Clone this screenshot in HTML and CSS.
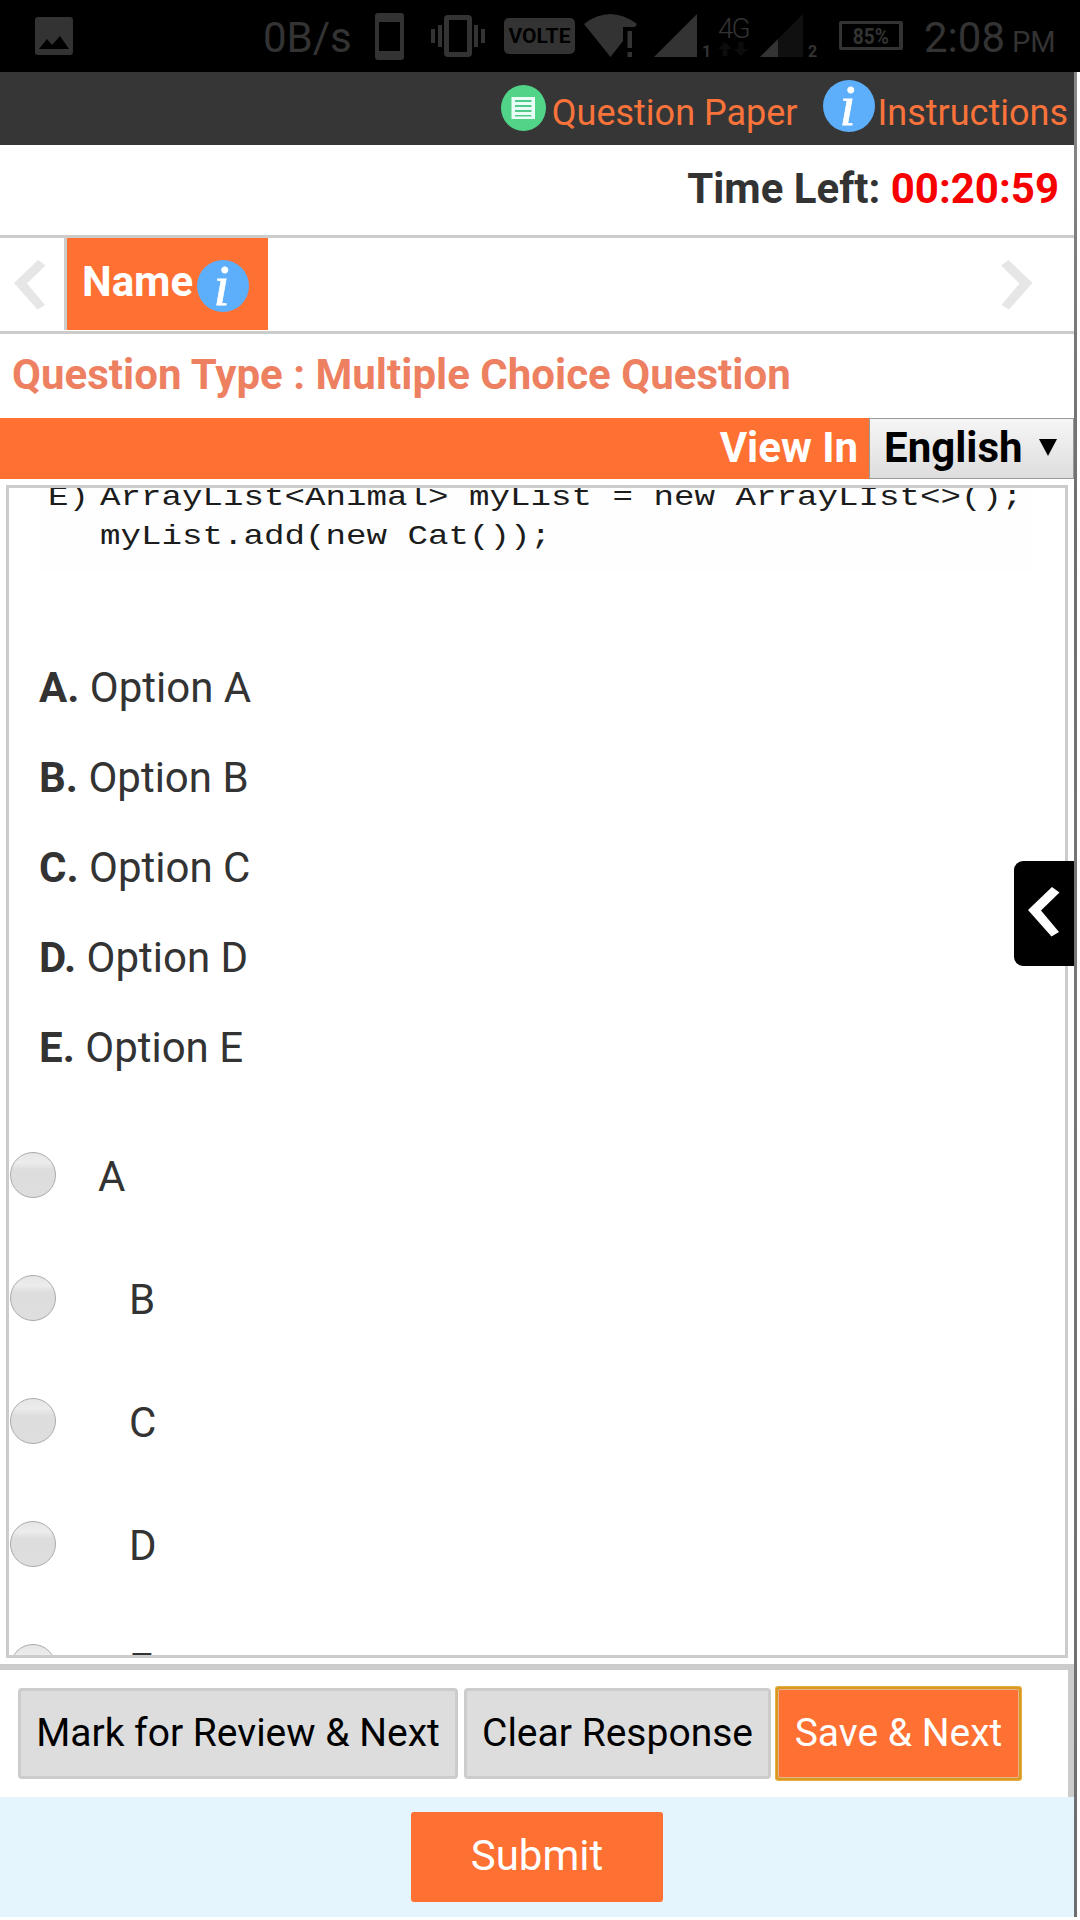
FILE: index.html
```html
<!DOCTYPE html>
<html lang="en">
<head>
<meta charset="utf-8">
<title>Online Exam</title>
<link rel="stylesheet" href="styles.css">
</head>
<body>
<div class="status">
  <svg class="st-picture" width="38" height="38" viewBox="0 0 38 38"><path fill-rule="evenodd" d="M3 0h32q3 0 3 3v32q0 3-3 3H3q-3 0-3-3V3q0-3 3-3zM4 32h30L25 19l-8 9-5-6z"/></svg>
  <span class="st-speed">0B/s</span>
  <svg class="st-phone" width="29" height="47" viewBox="0 0 29 47"><path fill-rule="evenodd" d="M3 0h23q3 0 3 3v41q0 3-3 3H3q-3 0-3-3V3q0-3 3-3zM4 9v29h21V9z"/></svg>
  <svg class="st-vibrate" width="54" height="42" viewBox="0 0 54 42"><path fill-rule="evenodd" d="M17 0h20q4 0 4 4v34q0 4-4 4H17q-4 0-4-4V4q0-4 4-4zM18 5v32h18V5z"/><path d="M0 14h4v14H0zM7 10h4v22H7zM43 10h4v22h-4zM50 14h4v14h-4z"/></svg>
  <span class="st-volte">VOLTE</span>
  <svg class="st-wifi" width="53" height="43" viewBox="0 0 53 43"><path d="M0 10Q26-10 53 10l-2 3H39v14L26.500 43z"/><path d="M43.500 17h4.500v17h-4.500zM43.500 38h4.500v5h-4.500z"/></svg>
  <svg class="st-signal" width="43" height="43" viewBox="0 0 43 43"><path d="M0 43 43 0v43z"/></svg>
  <span class="st-sim sim-one">1</span>
  <span class="st-net"><span>4G</span><svg width="30" height="14" viewBox="0 0 30 14"><path d="M7 0l7 7h-4.500v7h-5V7H0zM20.500 0h5v7H30l-7 7-7-7h4.500z"/></svg></span>
  <svg class="st-signal weak" width="43" height="43" viewBox="0 0 43 43"><path class="dim" d="M0 43 43 0v43z"/><path d="M0 43 18 25v18z"/></svg>
  <span class="st-sim sim-two">2</span>
  <span class="st-battery"><span>85%</span></span>
  <span class="st-time">2:08</span>
  <span class="st-pm">PM</span>
</div>

<div class="app">
  <main class="main">
    <header class="top">
      <svg class="paper-icon" width="45" height="46" viewBox="0 0 45 46"><ellipse cx="22.500" cy="23" rx="22.500" ry="23" fill="#51d488"/><path fill="#e9fdf6" d="M10.500 12h23.500v22H10.500z"/><path fill="#51c98a" d="M14 15h16.500v2H14zM14 20h16.500v2H14zM14 25h16.500v2H14zM14 30h16.500v1.500H14z"/></svg>
      <a class="link paper">Question Paper</a>
      <svg class="info-icon" width="52" height="52" viewBox="0 0 52 52"><circle cx="26" cy="26" r="26"/><text x="24.500" y="44.500">i</text></svg>
      <a class="link">Instructions</a>
    </header>
    <div class="timer">Time Left:&nbsp;<span class="clock">00:20:59</span></div>
    <nav class="tabs">
      <svg class="chev" width="32" height="50" viewBox="0 0 32 50"><path d="M0 23 24 0l7.500 5.500L13 23.500 31 45l-7.500 4.500z"/></svg>
      <div class="tab"><span>Name</span><svg class="info-icon" width="52" height="52" viewBox="0 0 52 52"><circle cx="26" cy="26" r="26"/><text x="24.500" y="44.500">i</text></svg></div>
      <svg class="chev next" width="32" height="50" viewBox="0 0 32 50"><path d="M31.500 23 7.500 0 0 5.500 18.500 23.500 .5 45 8 49.500z"/></svg>
    </nav>
    <h1 class="qtype">Question Type : Multiple Choice Question</h1>
    <div class="viewin">
      <span class="view-label">View In</span>
      <div class="lang"><span>English</span><svg width="18" height="17" viewBox="0 0 18 17"><path d="M0 0h18L9 17z"/></svg></div>
    </div>
    <section class="question">
      <div class="code">
        <pre>E)</pre>
        <pre>ArrayList&lt;Animal&gt; myList = new ArrayLIst&lt;&gt;();
myList.add(new Cat());</pre>
      </div>
      <ul class="options">
        <li><b>A.</b> Option A</li>
        <li><b>B.</b> Option B</li>
        <li><b>C.</b> Option C</li>
        <li><b>D.</b> Option D</li>
        <li><b>E.</b> Option E</li>
      </ul>
      <div class="answers">
        <label class="answer first"><i class="radio"></i><span>A</span></label>
        <label class="answer"><i class="radio"></i><span>B</span></label>
        <label class="answer"><i class="radio"></i><span>C</span></label>
        <label class="answer"><i class="radio"></i><span>D</span></label>
        <label class="answer"><i class="radio"></i><span>E</span></label>
      </div>
    </section>
    <div class="actions">
      <button class="btn mark">Mark for Review &amp; Next</button>
      <button class="btn clear">Clear Response</button>
      <button class="btn save">Save &amp; Next</button>
    </div>
    <footer class="bottom"><button class="submit">Submit</button></footer>
    <div class="drawer"><svg width="32" height="50" viewBox="0 0 32 50"><path d="M0 23 24 0l7.500 5.500L13 23.500 31 45l-7.500 4.500z"/></svg></div>
  </main>
  <div class="edge"></div>
</div>
</body>
</html>
```
FILE: styles.css
```css
* { box-sizing: border-box; }
body { margin: 0; width: 1080px; height: 1920px; overflow: hidden; background: #fff; color: #333; font: 42px Roboto, sans-serif; }
svg { display: block; flex: none; }
button { font-family: inherit; padding: 0; }

.status { display: flex; height: 72px; background: #000; color: #333; white-space: nowrap; line-height: 76px; }
.status > * { flex: none; }
.status svg { fill: #333; }
.st-picture { margin: 17px 0 0 35px; }
.st-speed { width: 89px; margin-left: 190px; }
.st-phone { margin: 13px 0 0 23px; }
.st-vibrate { margin: 15px 0 0 27px; }
.st-volte { width: 71px; height: 36px; margin: 18px 0 0 19px; background: #333; color: #000; border-radius: 5px; font-size: 21px; font-weight: 700; line-height: 36px; text-align: center; }
.st-wifi { margin: 14px 0 0 9px; }
.st-signal { margin: 14px 0 0 17px; }
.st-signal.weak { margin-left: 12px; }
.status .dim { fill: #101010; }
.st-sim { width: 9px; margin-left: 5px; padding-top: 42px; font-size: 16px; font-weight: 700; line-height: 19px; }
.st-net { width: 30px; margin-left: 7px; padding-top: 14px; font-size: 28px; font-weight: 300; line-height: 30px; letter-spacing: -2px; }
.st-net span { display: block; height: 28px; }
.status .st-net svg { fill: #0c0c0c; }
.st-battery { width: 64px; height: 29px; margin: 21px 0 0 22px; border: 3px solid #333; border-right-width: 4px; border-radius: 2px; font-size: 22px; font-weight: 700; line-height: 25px; text-align: center; }
.st-battery span { display: inline-block; margin: 0 -4px; transform: scaleX(.87); }
.st-time { width: 81px; margin-left: 21px; }
.st-pm { margin-left: 7px; padding-top: 4px; font-size: 29px; }

.app { display: flex; width: 1077px; height: 1845px; }
.main { position: relative; display: flex; flex-direction: column; width: 1074px; }
.main > * { flex: none; }
.edge { width: 3px; background: linear-gradient(#888, #6e6e6e 25%, #777 50%, #6e6e6e); }

.top { display: flex; align-items: flex-start; justify-content: flex-end; height: 73px; padding-right: 6px; background: #363636; }
.link { color: #f9733a; font-size: 36px; line-height: 83px; white-space: nowrap; }
.link.paper { margin: 0 25px 0 6px; }
.paper-icon { margin-top: 13px; }
.info-icon circle { fill: #5eaffb; }
.info-icon text { fill: #fff; stroke: #fff; stroke-width: .8px; font: italic 58px "Liberation Serif", serif; text-anchor: middle; }
.top .info-icon { margin: 8px 3px 0 0; }

.timer { height: 90px; padding-right: 15px; font-weight: 700; line-height: 87px; text-align: right; }
.clock { color: #f60000; }

.tabs { display: flex; height: 99px; border: 3px solid #ccc; border-width: 3px 0; padding-left: 14px; }
.chev { margin-top: 22px; fill: #e6e6e6; }
.chev.next { margin-left: auto; margin-right: 41px; }
.tab { display: flex; width: 204px; height: 92px; margin-left: 18px; padding-left: 15px; border-left: 3px solid #ccc; background: #ff7033; color: #fff; font-weight: 700; line-height: 87px; }
.tab span { width: 115px; }
.tab .info-icon { margin-top: 22px; }

.qtype { height: 84px; margin: 0; padding-left: 12px; color: #ee8062; font-size: 42px; letter-spacing: .02px; line-height: 82px; white-space: nowrap; }

.viewin { display: flex; justify-content: flex-end; height: 61px; background: #ff7033; font-weight: 700; line-height: 59px; }
.view-label { margin-right: 11px; color: #fff; }
.lang { display: flex; align-items: flex-start; width: 205px; padding-left: 14px; border: 1px solid #999; background: linear-gradient(#f6f6f6, #ddd); color: #000; line-height: 57px; }
.lang svg { margin: 20px 0 0 16px; }

.question { width: 1062px; height: 1173px; margin: 6px 0 6px 6px; border: 3px solid #ccc; overflow: hidden; }
.code { display: flex; width: 996px; height: 94px; margin: -10px 0 0 29px; padding-left: 10px; background: #fefefe; }
.code pre { width: 52px; margin: 0; color: #1c1c1c; font: 28px "Liberation Mono", monospace; line-height: 39px; transform: scaleX(1.22); transform-origin: 0 0; }
.options { margin: 71px 0 20px; padding: 0 0 0 30px; list-style: none; line-height: 90px; }
.answer { display: flex; align-items: center; height: 123px; padding-left: 1px; }
.radio { width: 46px; height: 46px; margin-right: 73px; border: 1px solid #aaa; border-radius: 50%; background: linear-gradient(#e6e6e6, #ececec 22%, #ddd 38%, #dedede); }
.first .radio { margin-right: 42px; }
.answer span { padding-top: 3px; }

.actions { display: flex; height: 133px; padding: 18px 0 0 18px; border: 6px solid #ccc; border-width: 6px 6px 0 0; }
.btn { height: 91px; padding-bottom: 2px; border: 3px solid #ccc; border-radius: 4px; background: #ddd; color: #000; font-size: 39px; white-space: nowrap; }
.mark { width: 440px; }
.clear { width: 307px; margin-left: 6px; }
.save { width: 239px; height: 87px; margin: 2px 0 0 8px; border: 0; border-radius: 1px; background: #ff7033; color: #fff; box-shadow: 0 0 0 1px #e8b48c, 0 0 0 3px #d9981f, 0 0 0 4px #e3ae48; }

.bottom { display: flex; justify-content: center; height: 120px; padding-top: 15px; background: #e4f5fd; }
.submit { width: 252px; height: 90px; padding-bottom: 4px; border: 0; border-radius: 3px; background: #ff7033; color: #fff; font-size: 42px; }

.drawer { position: absolute; right: 0; top: 789px; width: 60px; height: 105px; padding: 26px 0 0 14px; border-radius: 9px 0 0 9px; background: #000; }
.drawer svg { fill: #fff; }
```
